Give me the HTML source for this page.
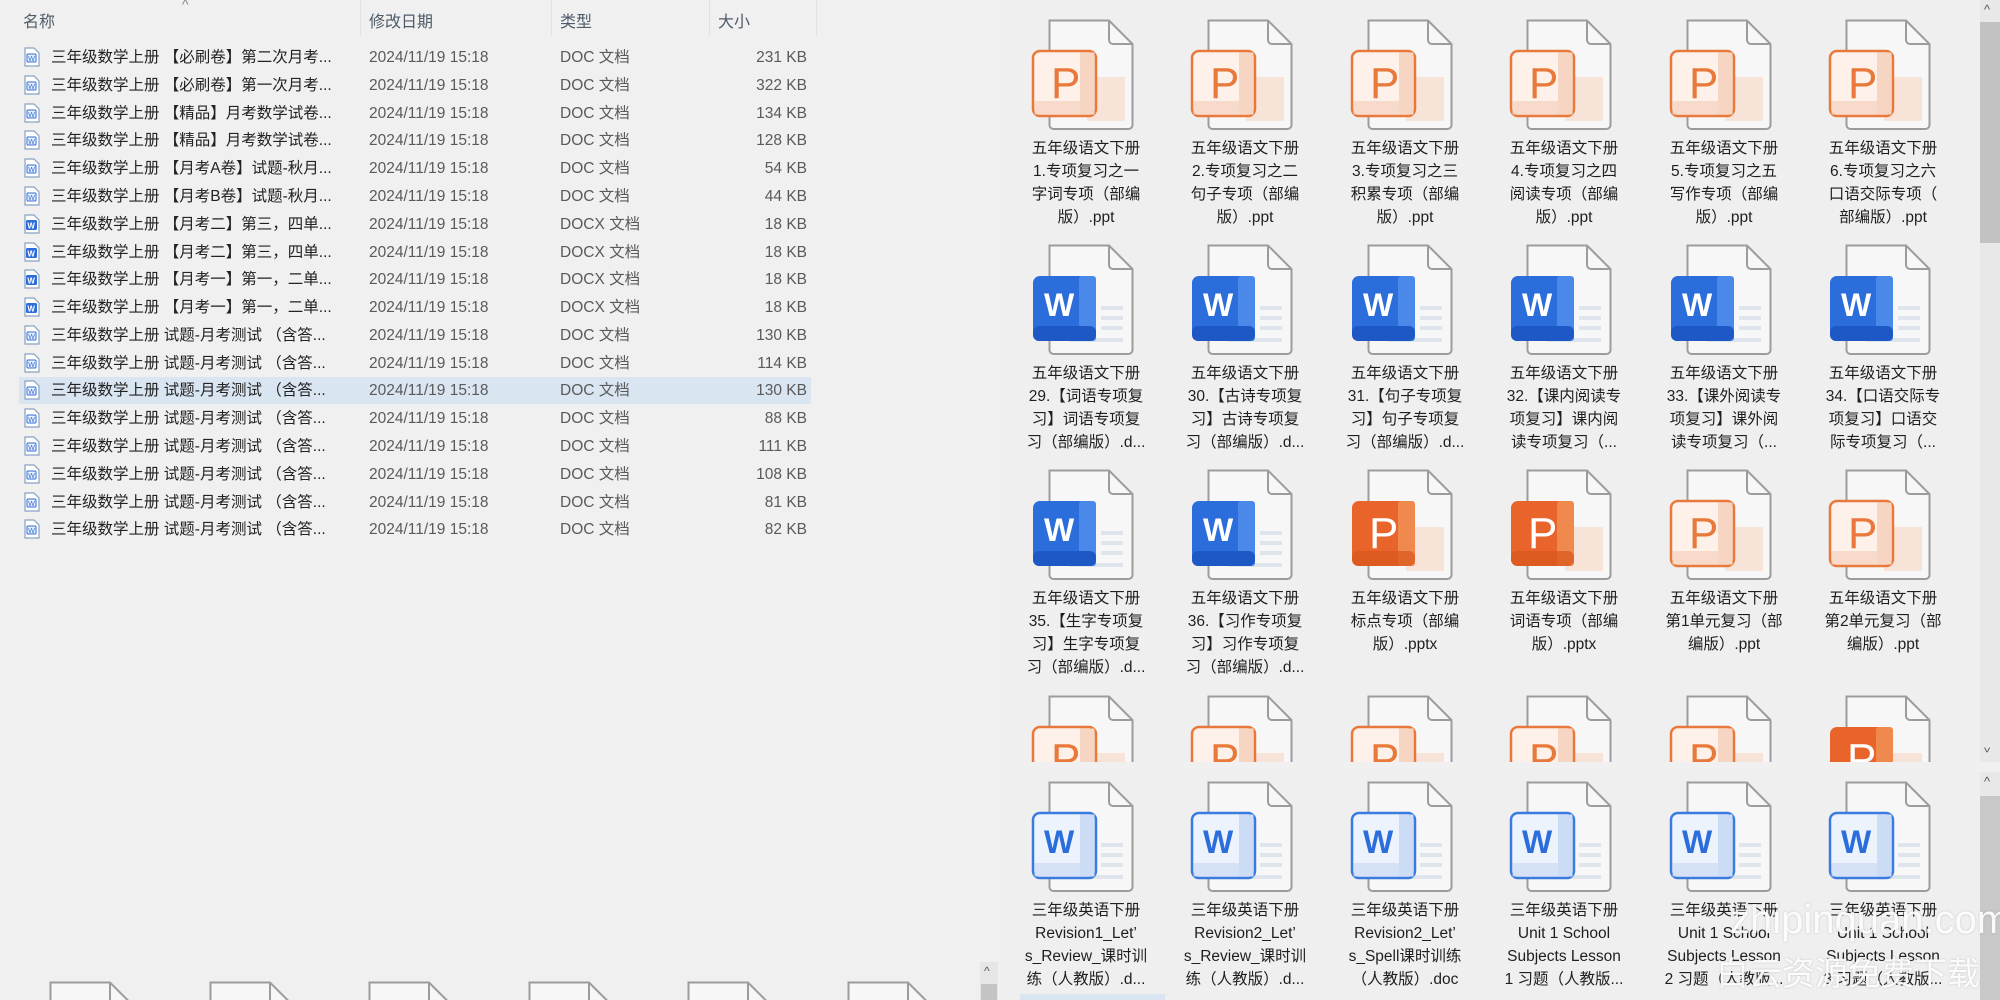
<!DOCTYPE html>
<html><head><meta charset="utf-8"><style>
*{margin:0;padding:0;box-sizing:border-box}
html,body{width:2000px;height:1000px;overflow:hidden}
body{background:#f0f0f0;font-family:"Liberation Sans","Noto Sans CJK SC",sans-serif;position:relative;color:#1e1e1e}
.hd{position:absolute;top:8px;font-size:16px;color:#4f5b68}
.sep{position:absolute;top:0;width:1px;height:36px;background:#e2e2e2}
.row{position:absolute;left:19px;width:792px;height:27px;font-size:15.5px;line-height:27px;white-space:nowrap}
.row.sel{background:#d9e5f0}
.row span{position:absolute;top:0}
.row .n{left:32px;color:#222}
.row .d{left:350px;color:#5a5a5a}
.row .t{left:541px;color:#5a5a5a}
.row .s{right:4px;color:#5a5a5a}
.row svg{position:absolute;left:5px;top:3px}
.it{position:absolute;width:160px}
.it svg{position:absolute;left:25px;top:0}
.lb{position:absolute;top:118px;left:0;width:160px;text-align:center;font-size:15.5px;line-height:23px;color:#1e1e1e;white-space:nowrap}
.clip{position:absolute;left:1000px;top:0;width:980px;height:762px;overflow:hidden}
.clip2{position:absolute;left:1000px;top:772px;width:980px;height:228px;overflow:hidden}
.wm{position:absolute;color:rgba(255,255,255,0.92);white-space:nowrap;text-shadow:0 0 2px rgba(120,120,120,0.35)}
</style></head><body>
<svg width="0" height="0" style="position:absolute">
<defs>
<g id="pg"><path d="M18.5 1.5H78L101.5 25V106a4 4 0 0 1-4 4H22.5a4 4 0 0 1-4-4Z" fill="#f7f7f7" stroke="#9c9c9c" stroke-width="2"/><path d="M78 1.5V21a4 4 0 0 0 4 4H101.5" fill="none" stroke="#9c9c9c" stroke-width="2"/></g>
<g id="pl"><use href="#pg"/><rect x="56" y="58" width="38" height="44" fill="#f7e3d8"/><rect x="2" y="32" width="63" height="65" rx="7" fill="#fdf1ea" stroke="#e8793a" stroke-width="2.5"/><rect x="49" y="33.5" width="14.5" height="62" fill="#f6d5c2"/><rect x="3.5" y="82" width="60" height="13.5" fill="#f6d5c2" opacity=".8"/><text x="20" y="79" font-family="Liberation Sans" font-size="44" fill="#e8793a">P</text></g>
<g id="ps"><use href="#pg"/><rect x="56" y="58" width="38" height="44" fill="#f7e3d8"/><rect x="2" y="32" width="63" height="65" rx="7" fill="#e8642a"/><rect x="48" y="32" width="17" height="65" rx="3" fill="#f0894e"/><rect x="2" y="82" width="63" height="15" rx="6" fill="#d9561d" opacity=".7"/><text x="19" y="79" font-family="Liberation Sans" font-size="44" fill="#fff">P</text></g>
<g id="ws"><use href="#pg"/><rect x="70" y="62" width="22" height="4" fill="#dfe5ec"/><rect x="70" y="72" width="22" height="4" fill="#dfe5ec"/><rect x="70" y="82" width="22" height="4" fill="#dfe5ec"/><rect x="38" y="94" width="54" height="4" fill="#dfe5ec"/><rect x="2" y="32" width="63" height="65" rx="7" fill="#2c6ddc"/><rect x="48" y="32" width="17" height="65" rx="3" fill="#4a88ea"/><rect x="2" y="82" width="63" height="15" rx="6" fill="#1e58c4"/><text x="13" y="72" font-family="Liberation Sans" font-size="32" font-weight="bold" fill="#fff">W</text></g>
<g id="wl"><use href="#pg"/><rect x="70" y="62" width="22" height="4" fill="#dfe5ec"/><rect x="70" y="72" width="22" height="4" fill="#dfe5ec"/><rect x="70" y="82" width="22" height="4" fill="#dfe5ec"/><rect x="38" y="94" width="54" height="4" fill="#dfe5ec"/><rect x="2" y="32" width="63" height="65" rx="7" fill="#edf3fd" stroke="#3b7be0" stroke-width="2.5"/><rect x="49" y="33.5" width="14.5" height="62" fill="#cddcf5"/><rect x="3.5" y="82" width="60" height="13.5" fill="#cddcf5" opacity=".8"/><text x="13" y="72" font-family="Liberation Sans" font-size="32" font-weight="bold" fill="#2c6ddc">W</text></g>
<g id="sd"><path d="M1 1H10L15 6V19H1Z" fill="#fff" stroke="#8aa0c0" stroke-width="1.2"/><rect x="3" y="7" width="9" height="8" rx="1" fill="#e9f0fb" stroke="#2c6ddc" stroke-width="1"/><text x="4.3" y="14" font-family="Liberation Sans" font-size="7" fill="#2c6ddc">W</text></g>
<g id="sb"><path d="M1 1H10L15 6V19H1Z" fill="#fff" stroke="#8aa0c0" stroke-width="1.2"/><rect x="2" y="6" width="11" height="10" rx="1.5" fill="#2c6ddc"/><text x="3.4" y="14.5" font-family="Liberation Sans" font-size="8" font-weight="bold" fill="#fff">W</text></g>
</defs></svg>

<div class="hd" style="left:23px">名称</div>
<div style="position:absolute;left:182px;top:-4px;font-size:14px;color:#888">^</div>
<div class="sep" style="left:360px"></div>
<div class="hd" style="left:369px">修改日期</div>
<div class="sep" style="left:551px"></div>
<div class="hd" style="left:560px">类型</div>
<div class="sep" style="left:709px"></div>
<div class="hd" style="left:718px">大小</div>
<div class="sep" style="left:816px"></div>

<div class="row" style="top:44px"><svg width="16" height="20"><use href="#sd"/></svg><span class="n">三年级数学上册 【必刷卷】第二次月考...</span><span class="d">2024/11/19 15:18</span><span class="t">DOC 文档</span><span class="s">231 KB</span></div>
<div class="row" style="top:72px"><svg width="16" height="20"><use href="#sd"/></svg><span class="n">三年级数学上册 【必刷卷】第一次月考...</span><span class="d">2024/11/19 15:18</span><span class="t">DOC 文档</span><span class="s">322 KB</span></div>
<div class="row" style="top:100px"><svg width="16" height="20"><use href="#sd"/></svg><span class="n">三年级数学上册 【精品】月考数学试卷...</span><span class="d">2024/11/19 15:18</span><span class="t">DOC 文档</span><span class="s">134 KB</span></div>
<div class="row" style="top:127px"><svg width="16" height="20"><use href="#sd"/></svg><span class="n">三年级数学上册 【精品】月考数学试卷...</span><span class="d">2024/11/19 15:18</span><span class="t">DOC 文档</span><span class="s">128 KB</span></div>
<div class="row" style="top:155px"><svg width="16" height="20"><use href="#sd"/></svg><span class="n">三年级数学上册 【月考A卷】试题-秋月...</span><span class="d">2024/11/19 15:18</span><span class="t">DOC 文档</span><span class="s">54 KB</span></div>
<div class="row" style="top:183px"><svg width="16" height="20"><use href="#sd"/></svg><span class="n">三年级数学上册 【月考B卷】试题-秋月...</span><span class="d">2024/11/19 15:18</span><span class="t">DOC 文档</span><span class="s">44 KB</span></div>
<div class="row" style="top:211px"><svg width="16" height="20"><use href="#sb"/></svg><span class="n">三年级数学上册 【月考二】第三，四单...</span><span class="d">2024/11/19 15:18</span><span class="t">DOCX 文档</span><span class="s">18 KB</span></div>
<div class="row" style="top:239px"><svg width="16" height="20"><use href="#sb"/></svg><span class="n">三年级数学上册 【月考二】第三，四单...</span><span class="d">2024/11/19 15:18</span><span class="t">DOCX 文档</span><span class="s">18 KB</span></div>
<div class="row" style="top:266px"><svg width="16" height="20"><use href="#sb"/></svg><span class="n">三年级数学上册 【月考一】第一，二单...</span><span class="d">2024/11/19 15:18</span><span class="t">DOCX 文档</span><span class="s">18 KB</span></div>
<div class="row" style="top:294px"><svg width="16" height="20"><use href="#sb"/></svg><span class="n">三年级数学上册 【月考一】第一，二单...</span><span class="d">2024/11/19 15:18</span><span class="t">DOCX 文档</span><span class="s">18 KB</span></div>
<div class="row" style="top:322px"><svg width="16" height="20"><use href="#sd"/></svg><span class="n">三年级数学上册 试题-月考测试 （含答...</span><span class="d">2024/11/19 15:18</span><span class="t">DOC 文档</span><span class="s">130 KB</span></div>
<div class="row" style="top:350px"><svg width="16" height="20"><use href="#sd"/></svg><span class="n">三年级数学上册 试题-月考测试 （含答...</span><span class="d">2024/11/19 15:18</span><span class="t">DOC 文档</span><span class="s">114 KB</span></div>
<div class="row sel" style="top:377px"><svg width="16" height="20"><use href="#sd"/></svg><span class="n">三年级数学上册 试题-月考测试 （含答...</span><span class="d">2024/11/19 15:18</span><span class="t">DOC 文档</span><span class="s">130 KB</span></div>
<div class="row" style="top:405px"><svg width="16" height="20"><use href="#sd"/></svg><span class="n">三年级数学上册 试题-月考测试 （含答...</span><span class="d">2024/11/19 15:18</span><span class="t">DOC 文档</span><span class="s">88 KB</span></div>
<div class="row" style="top:433px"><svg width="16" height="20"><use href="#sd"/></svg><span class="n">三年级数学上册 试题-月考测试 （含答...</span><span class="d">2024/11/19 15:18</span><span class="t">DOC 文档</span><span class="s">111 KB</span></div>
<div class="row" style="top:461px"><svg width="16" height="20"><use href="#sd"/></svg><span class="n">三年级数学上册 试题-月考测试 （含答...</span><span class="d">2024/11/19 15:18</span><span class="t">DOC 文档</span><span class="s">108 KB</span></div>
<div class="row" style="top:489px"><svg width="16" height="20"><use href="#sd"/></svg><span class="n">三年级数学上册 试题-月考测试 （含答...</span><span class="d">2024/11/19 15:18</span><span class="t">DOC 文档</span><span class="s">81 KB</span></div>
<div class="row" style="top:516px"><svg width="16" height="20"><use href="#sd"/></svg><span class="n">三年级数学上册 试题-月考测试 （含答...</span><span class="d">2024/11/19 15:18</span><span class="t">DOC 文档</span><span class="s">82 KB</span></div>

<svg style="position:absolute;left:0;top:980px" width="980" height="20">
<g transform="translate(32,1)"><use href="#pg"/></g>
<g transform="translate(192,1)"><use href="#pg"/></g>
<g transform="translate(351,1)"><use href="#pg"/></g>
<g transform="translate(511,1)"><use href="#pg"/></g>
<g transform="translate(670,1)"><use href="#pg"/></g>
<g transform="translate(830,1)"><use href="#pg"/></g>
</svg>
<div style="position:absolute;left:980px;top:962px;width:18px;height:38px;background:#e6e6e6"></div>
<div style="position:absolute;left:984px;top:964px;font-size:12px;color:#555">^</div>
<div style="position:absolute;left:981px;top:984px;width:16px;height:16px;background:#c4c4c4"></div>

<div class="clip" style="background:#efefef">
<div class="it" style="left:6px;top:19px"><svg width="110" height="112"><use href="#pl"/></svg><div class="lb">五年级语文下册<br>1.专项复习之一<br>字词专项（部编<br>版）.ppt</div></div>
<div class="it" style="left:165px;top:19px"><svg width="110" height="112"><use href="#pl"/></svg><div class="lb">五年级语文下册<br>2.专项复习之二<br>句子专项（部编<br>版）.ppt</div></div>
<div class="it" style="left:325px;top:19px"><svg width="110" height="112"><use href="#pl"/></svg><div class="lb">五年级语文下册<br>3.专项复习之三<br>积累专项（部编<br>版）.ppt</div></div>
<div class="it" style="left:484px;top:19px"><svg width="110" height="112"><use href="#pl"/></svg><div class="lb">五年级语文下册<br>4.专项复习之四<br>阅读专项（部编<br>版）.ppt</div></div>
<div class="it" style="left:644px;top:19px"><svg width="110" height="112"><use href="#pl"/></svg><div class="lb">五年级语文下册<br>5.专项复习之五<br>写作专项（部编<br>版）.ppt</div></div>
<div class="it" style="left:803px;top:19px"><svg width="110" height="112"><use href="#pl"/></svg><div class="lb">五年级语文下册<br>6.专项复习之六<br>口语交际专项（<br>部编版）.ppt</div></div>

<div class="it" style="left:6px;top:244px"><svg width="110" height="112"><use href="#ws"/></svg><div class="lb">五年级语文下册<br>29.【词语专项复<br>习】词语专项复<br>习（部编版）.d...</div></div>
<div class="it" style="left:165px;top:244px"><svg width="110" height="112"><use href="#ws"/></svg><div class="lb">五年级语文下册<br>30.【古诗专项复<br>习】古诗专项复<br>习（部编版）.d...</div></div>
<div class="it" style="left:325px;top:244px"><svg width="110" height="112"><use href="#ws"/></svg><div class="lb">五年级语文下册<br>31.【句子专项复<br>习】句子专项复<br>习（部编版）.d...</div></div>
<div class="it" style="left:484px;top:244px"><svg width="110" height="112"><use href="#ws"/></svg><div class="lb">五年级语文下册<br>32.【课内阅读专<br>项复习】课内阅<br>读专项复习（...</div></div>
<div class="it" style="left:644px;top:244px"><svg width="110" height="112"><use href="#ws"/></svg><div class="lb">五年级语文下册<br>33.【课外阅读专<br>项复习】课外阅<br>读专项复习（...</div></div>
<div class="it" style="left:803px;top:244px"><svg width="110" height="112"><use href="#ws"/></svg><div class="lb">五年级语文下册<br>34.【口语交际专<br>项复习】口语交<br>际专项复习（...</div></div>

<div class="it" style="left:6px;top:469px"><svg width="110" height="112"><use href="#ws"/></svg><div class="lb">五年级语文下册<br>35.【生字专项复<br>习】生字专项复<br>习（部编版）.d...</div></div>
<div class="it" style="left:165px;top:469px"><svg width="110" height="112"><use href="#ws"/></svg><div class="lb">五年级语文下册<br>36.【习作专项复<br>习】习作专项复<br>习（部编版）.d...</div></div>
<div class="it" style="left:325px;top:469px"><svg width="110" height="112"><use href="#ps"/></svg><div class="lb">五年级语文下册<br>标点专项（部编<br>版）.pptx</div></div>
<div class="it" style="left:484px;top:469px"><svg width="110" height="112"><use href="#ps"/></svg><div class="lb">五年级语文下册<br>词语专项（部编<br>版）.pptx</div></div>
<div class="it" style="left:644px;top:469px"><svg width="110" height="112"><use href="#pl"/></svg><div class="lb">五年级语文下册<br>第1单元复习（部<br>编版）.ppt</div></div>
<div class="it" style="left:803px;top:469px"><svg width="110" height="112"><use href="#pl"/></svg><div class="lb">五年级语文下册<br>第2单元复习（部<br>编版）.ppt</div></div>

<div class="it" style="left:6px;top:695px"><svg width="110" height="112"><use href="#pl"/></svg></div>
<div class="it" style="left:165px;top:695px"><svg width="110" height="112"><use href="#pl"/></svg></div>
<div class="it" style="left:325px;top:695px"><svg width="110" height="112"><use href="#pl"/></svg></div>
<div class="it" style="left:484px;top:695px"><svg width="110" height="112"><use href="#pl"/></svg></div>
<div class="it" style="left:644px;top:695px"><svg width="110" height="112"><use href="#pl"/></svg></div>
<div class="it" style="left:803px;top:695px"><svg width="110" height="112"><use href="#ps"/></svg></div>
</div>
<div style="position:absolute;left:1980px;top:0;width:20px;height:762px;background:#e8e8e8"></div>
<div style="position:absolute;left:1984px;top:2px;font-size:13px;color:#555">^</div>
<div style="position:absolute;left:1980px;top:22px;width:20px;height:221px;background:#c2c2c2"></div>
<div style="position:absolute;left:1984px;top:740px;font-size:13px;color:#555;transform:rotate(180deg)">^</div>

<div class="clip2" style="background:#efefef">
<div class="it" style="left:6px;top:9px"><svg width="110" height="112"><use href="#wl"/></svg><div class="lb">三年级英语下册<br>Revision1_Let’<br>s_Review_课时训<br>练（人教版）.d...</div></div>
<div class="it" style="left:165px;top:9px"><svg width="110" height="112"><use href="#wl"/></svg><div class="lb">三年级英语下册<br>Revision2_Let’<br>s_Review_课时训<br>练（人教版）.d...</div></div>
<div class="it" style="left:325px;top:9px"><svg width="110" height="112"><use href="#wl"/></svg><div class="lb">三年级英语下册<br>Revision2_Let’<br>s_Spell课时训练<br>（人教版）.doc</div></div>
<div class="it" style="left:484px;top:9px"><svg width="110" height="112"><use href="#wl"/></svg><div class="lb">三年级英语下册<br>Unit 1 School<br>Subjects Lesson<br>1 习题（人教版...</div></div>
<div class="it" style="left:644px;top:9px"><svg width="110" height="112"><use href="#wl"/></svg><div class="lb">三年级英语下册<br>Unit 1 School<br>Subjects Lesson<br>2 习题（人教版...</div></div>
<div class="it" style="left:803px;top:9px"><svg width="110" height="112"><use href="#wl"/></svg><div class="lb">三年级英语下册<br>Unit 1 School<br>Subjects Lesson<br>3 习题（人教版...</div></div>
<div style="position:absolute;left:20px;top:222px;width:145px;height:6px;background:#d9e5f0"></div>
</div>
<div style="position:absolute;left:1980px;top:772px;width:20px;height:228px;background:#e8e8e8"></div>
<div style="position:absolute;left:1984px;top:774px;font-size:13px;color:#555">^</div>
<div style="position:absolute;left:1980px;top:796px;width:20px;height:204px;background:#c8c8c8"></div>

<div class="wm" style="left:1730px;top:896px;font-size:40px;line-height:48px;font-family:'Liberation Sans',sans-serif">zhipinquan.com</div>
<div class="wm" style="left:1716px;top:954px;font-size:33px;line-height:40px;font-family:'Liberation Sans','Noto Sans CJK SC',sans-serif">白云资源免费下载</div>
</body></html>
